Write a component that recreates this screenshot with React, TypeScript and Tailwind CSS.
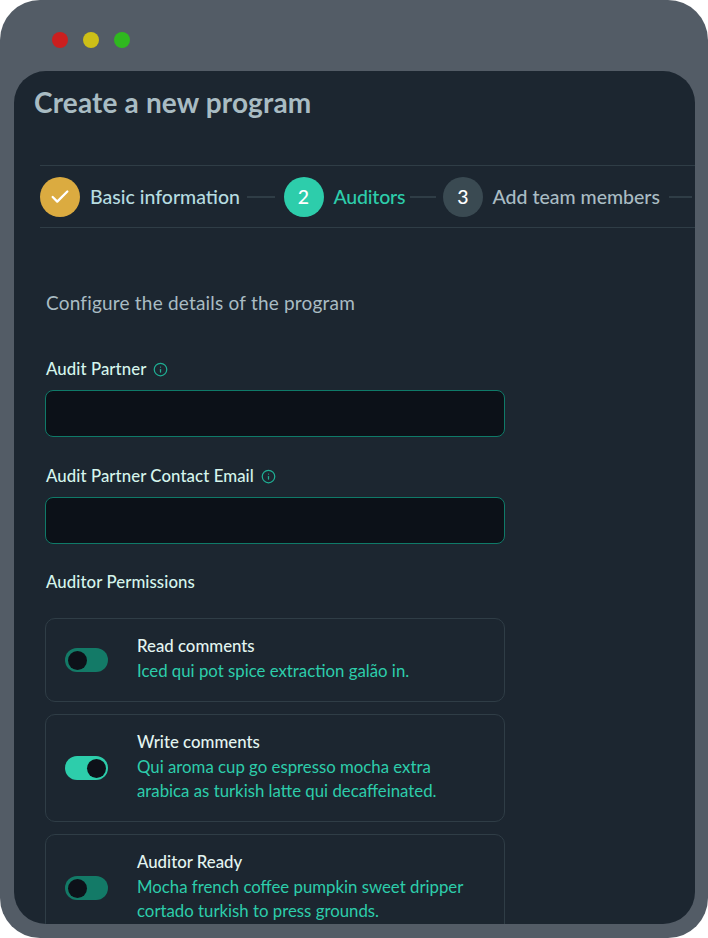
import { Check, Info } from "lucide-react"

const font = { fontFamily: '"Lato", "Noto Sans", sans-serif' }

function StepLine({ className }: { className: string }) {
  return <div className={`h-[2px] shrink-0 bg-[#2f3d46] ${className}`} />
}

function Label({ children, info }: { children: string; info?: boolean }) {
  return (
    <div className="flex items-center gap-[7px] h-6 pl-px text-[16.8px] tracking-[0.08px] font-medium leading-6 text-[#d5f5ec]">
      <span>{children}</span>
      {info && <Info className="w-[15px] h-[15px] text-[#1fae93]" strokeWidth={2} />}
    </div>
  )
}

function Toggle({ on }: { on?: boolean }) {
  return (
    <div
      className={`w-[43px] h-6 shrink-0 rounded-full p-[2.5px] flex ${
        on ? "bg-[#2dcdab] justify-end" : "bg-[#137a67] justify-start"
      }`}
    >
      <div className="w-[19px] h-[19px] rounded-full bg-[#0d1119]" />
    </div>
  )
}

function PermissionCard({
  title,
  lines,
  on,
  className,
}: {
  title: string
  lines: string[]
  on?: boolean
  className: string
}) {
  return (
    <div className={`flex items-center w-[460px] shrink-0 border border-[#2f3d46] rounded-[10px] pl-[19px] ${className}`}>
      <Toggle on={on} />
      <div className="ml-[29px] pb-1">
        <div className="mb-px text-[16.8px] font-medium leading-6 text-[#e3f5f0]">{title}</div>
        {lines.map((line) => (
          <div key={line} className="text-[16.8px] leading-6 text-[#2dcdab]">
            {line}
          </div>
        ))}
      </div>
    </div>
  )
}

export default function App() {
  return (
    <div className="w-[708px] h-[938px] bg-white" style={font}>
      <div className="w-full h-full bg-[#535c66] rounded-[40px] pt-[32px] pl-[14px] pr-[13px] pb-[14px] flex flex-col">
        {/* Window dots */}
        <div className="ml-[38px] mb-[23px] h-4 shrink-0 flex gap-[15px]">
          <div className="w-4 h-4 rounded-full bg-[#cb1f1f]" />
          <div className="w-4 h-4 rounded-full bg-[#cdbf17]" />
          <div className="w-4 h-4 rounded-full bg-[#2fb81f]" />
        </div>

        <div className="flex-1 min-h-0 bg-[#1c2630] rounded-[32px] overflow-hidden flex flex-col">
          <h1 className="ml-5 mt-[13px] h-9 shrink-0 text-[28px] tracking-[0.15px] font-bold leading-9 text-[#a9bcc3]">Create a new program</h1>

          {/* Stepper */}
          <div className="ml-[26px] mt-[45px] h-[63px] shrink-0 border-y border-[#2f3d46] flex items-center whitespace-nowrap text-[19.5px] font-medium">
            <div className="w-10 h-10 shrink-0 rounded-full bg-[#dbab40] flex items-center justify-center">
              <Check className="w-[22px] h-[22px] text-white" strokeWidth={2.5} />
            </div>
            <span className="ml-[10px] w-[150px] text-[#b6dce0]">Basic information</span>
            <StepLine className="ml-[7px] w-[28px]" />
            <div className="ml-[8.5px] w-10 h-10 shrink-0 rounded-full bg-[#2dcdab] flex items-center justify-center text-white">2</div>
            <span className="ml-[10px] w-[72px] tracking-[-0.2px] text-[#2dcdab]">Auditors</span>
            <StepLine className="ml-1 w-[26px]" />
            <div className="ml-[7.5px] w-10 h-10 shrink-0 rounded-full bg-[#3a4a52] flex items-center justify-center text-white">3</div>
            <span className="ml-[9.5px] w-[168px] text-[#a9bcc3]">Add team members</span>
            <StepLine className="ml-[8.5px] w-[23px]" />
          </div>

          {/* Form */}
          <div className="pl-[31px] flex flex-col">
            <p className="mt-[62px] h-[26px] pl-px text-[19px] tracking-[0.2px] leading-[26px] text-[#a9bcc3]">Configure the details of the program</p>
            <div className="mt-[41px]">
              <Label info>Audit Partner</Label>
            </div>
            <div className="mt-[9px] w-[460px] h-[47px] shrink-0 bg-[#0c1118] border border-[#0f7a68] rounded-lg" />
            <div className="mt-[27px]">
              <Label info>Audit Partner Contact Email</Label>
            </div>
            <div className="mt-[9px] w-[460px] h-[47px] shrink-0 bg-[#0c1118] border border-[#0f7a68] rounded-lg" />
            <div className="mt-[26px]">
              <Label>Auditor Permissions</Label>
            </div>
            <PermissionCard
              className="mt-6 h-[84px]"
              title="Read comments"
              lines={["Iced qui pot spice extraction galão in."]}
            />
            <PermissionCard
              className="mt-3 h-[108px]"
              on
              title="Write comments"
              lines={["Qui aroma cup go espresso mocha extra", "arabica as turkish latte qui decaffeinated."]}
            />
            <PermissionCard
              className="mt-3 h-[108px]"
              title="Auditor Ready"
              lines={["Mocha french coffee pumpkin sweet dripper", "cortado turkish to press grounds."]}
            />
          </div>
        </div>
      </div>
    </div>
  )
}
